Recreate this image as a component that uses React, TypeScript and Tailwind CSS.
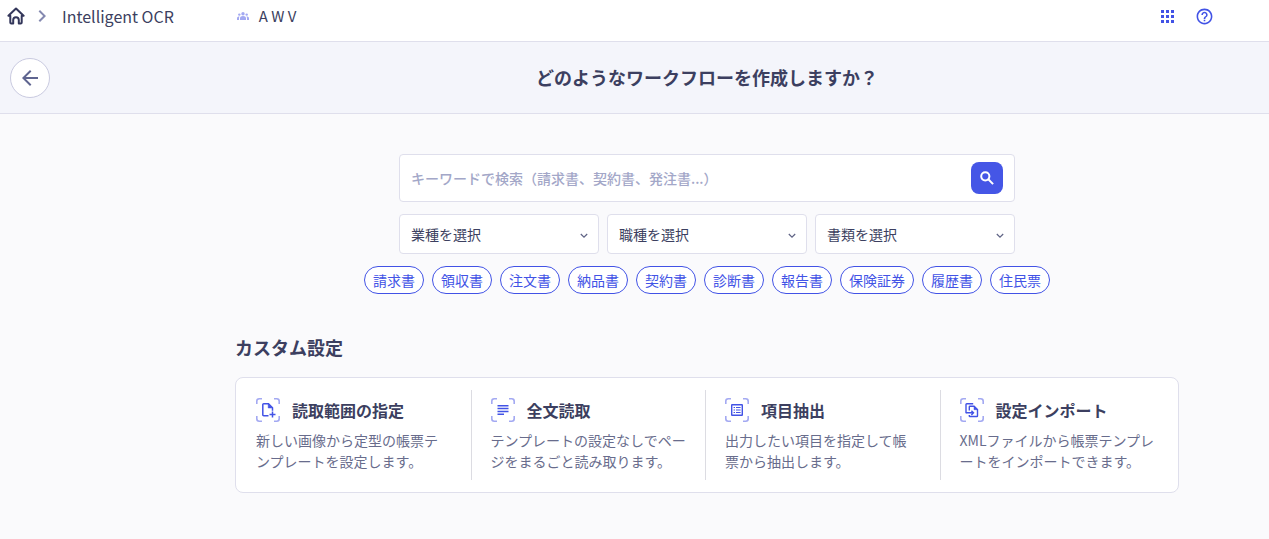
import { useState } from 'react';
import type { ReactNode } from 'react';
import { MdArrowBack, MdChevronRight, MdHelpOutline } from 'react-icons/md';

const FILTERS = [
  { id: 'industry', label: '業種を選択' },
  { id: 'job', label: '職種を選択' },
  { id: 'document', label: '書類を選択' },
];

const TAGS = [
  '請求書',
  '領収書',
  '注文書',
  '納品書',
  '契約書',
  '診断書',
  '報告書',
  '保険証券',
  '履歴書',
  '住民票',
];

function HomeIcon() {
  return (
    <svg viewBox="0 0 18 18" className="w-[18px] h-[18px]" fill="none" stroke="#33365a" strokeWidth="2" strokeLinejoin="round" strokeLinecap="round">
      <path d="M1.4 8.8 9 1.5l7.6 7.3h-1.9v6.7a1 1 0 0 1-1 1h-1.9v-3.4a2.8 2.8 0 0 0-5.6 0v3.4H4.3a1 1 0 0 1-1-1V8.8z" />
    </svg>
  );
}

function GroupIcon() {
  return (
    <svg viewBox="0 0 12 8" className="w-3 h-2" fill="#a3a9f2">
      <circle cx="6" cy="1.7" r="1.7" />
      <circle cx="2.3" cy="2.6" r="1.2" />
      <circle cx="9.7" cy="2.6" r="1.2" />
      <path d="M3 8V6.3c0-1.5 1.3-2.3 3-2.3s3 .8 3 2.3V8zM0 8V6c0-1 .9-1.6 2.6-1.6-.4.5-.6 1.1-.6 1.9V8zM12 8V6c0-1-.9-1.6-2.6-1.6.4.5.6 1.1.6 1.9V8z" />
    </svg>
  );
}

function AppsIcon() {
  return (
    <svg viewBox="0 0 13 13" className="w-[13px] h-[13px]" fill="currentColor">
      <path d="M0 0h3v3H0zM5 0h3v3H5zM10 0h3v3h-3zM0 5h3v3H0zM5 5h3v3H5zM10 5h3v3h-3zM0 10h3v3H0zM5 10h3v3H5zM10 10h3v3h-3z" />
    </svg>
  );
}

function SearchIcon() {
  return (
    <svg viewBox="0 0 14 14" className="w-[14px] h-[14px]" fill="none" stroke="currentColor" strokeWidth="2">
      <circle cx="5.3" cy="5.3" r="4.1" />
      <path d="m8.3 8.3 4.8 4.8" />
    </svg>
  );
}

// Corner brackets shared by every card icon
function ScanFrame({ children }: { children: ReactNode }) {
  return (
    <svg viewBox="0 0 24 24" className="w-6 h-6 shrink-0" fill="none">
      <path
        d="M.8 6V3.3A2.5 2.5 0 0 1 3.3.8H6M18 .8h2.7a2.5 2.5 0 0 1 2.5 2.5V6M23.2 18v2.7a2.5 2.5 0 0 1-2.5 2.5H18M6 23.2H3.3a2.5 2.5 0 0 1-2.5-2.5V18"
        stroke="#a3a9f2"
        strokeWidth="1.6"
      />
      {children}
    </svg>
  );
}

const CARDS = [
  {
    title: '読取範囲の指定',
    text: '新しい画像から定型の帳票テ\nンプレートを設定します。',
    icon: (
      <g stroke="#4253e6" strokeWidth="1.5">
        <path d="M12.5 17.7H7.7a.9.9 0 0 1-.9-.9V6.6a.9.9 0 0 1 .9-.9h4.8l4 4v3" />
        <path d="M12.2 5.8v4.2h4.2z" fill="#4253e6" strokeWidth=".5" />
        <path d="M16.5 13.5v6M13.5 16.5h6" />
      </g>
    ),
  },
  {
    title: '全文読取',
    text: 'テンプレートの設定なしでペー\nジをまるごと読み取ります。',
    icon: <path d="M6.5 7.7h11M6.5 10.6h11M6.5 13.4h11M6.5 16.3h6.5" stroke="#4253e6" strokeWidth="1.5" />,
  },
  {
    title: '項目抽出',
    text: '出力したい項目を指定して帳\n票から抽出します。',
    icon: (
      <g stroke="#4253e6" strokeWidth="1.4">
        <rect x="6.7" y="6.7" width="10.6" height="10.6" rx=".4" />
        <path d="M8.6 9.5H10M11 9.5h4.6M8.6 12H10M11 12h4.6M8.6 14.5H10M11 14.5h4.6" strokeWidth="1.2" />
      </g>
    ),
  },
  {
    title: '設定インポート',
    text: 'XMLファイルから帳票テンプレ\nートをインポートできます。',
    icon: (
      <g stroke="#4253e6" strokeWidth="1.4">
        <path d="M13.2 5.7H6.7a.7.7 0 0 0-.7.7v8.8" />
        <path d="M9.3 12.5V8.8a.6.6 0 0 1 .6-.6h4.2l3.4 3.4v6.3a.6.6 0 0 1-.6.6H9.9a.6.6 0 0 1-.6-.6v-.9" />
        <path d="M14 8.3v3.4h3.4z" fill="#4253e6" strokeWidth=".5" />
        <path d="M6 14.8h7.4M11.4 12.7l2.1 2.1-2.1 2.1" />
      </g>
    ),
  },
];

function TopBar() {
  return (
    <header className="flex items-start justify-between h-[42px] bg-white border-b border-[#dfdfec] pl-[7px] pr-[55px] pt-1">
      <div className="flex items-center h-6">
        <a href="#" aria-label="ホーム">
          <HomeIcon />
        </a>
        <MdChevronRight className="w-6 h-6 ml-[5px] text-[#8489b0]" />
        <span className="ml-2 text-base leading-6">Intelligent OCR</span>
        <span className="flex items-center gap-[10px] ml-[63px]">
          <GroupIcon />
          <span className="text-[15px] leading-6">A W V</span>
        </span>
      </div>
      <div className="flex items-center h-6 gap-[21px] text-[#4253e6]">
        <button type="button" aria-label="アプリ">
          <AppsIcon />
        </button>
        <button type="button" aria-label="ヘルプ">
          <MdHelpOutline className="w-[19px] h-[19px]" />
        </button>
      </div>
    </header>
  );
}

export default function App() {
  const [keyword, setKeyword] = useState('');

  return (
    <div lang="ja" className="min-h-screen bg-[#fafafc] text-[#3c3f60] font-['Noto_Sans_CJK_JP',sans-serif]">
      <TopBar />

      <div className="flex items-center h-[72px] px-[10px] bg-[#f4f5fb] border-b border-[#dfdfec]">
        <button
          type="button"
          aria-label="戻る"
          className="flex items-center justify-center w-10 h-10 rounded-full bg-white border border-[#c9cae0] text-[#5f6590]"
        >
          <MdArrowBack className="w-6 h-6" />
        </button>
        <h1 className="flex-1 pl-[105px] pb-[2px] text-center text-lg leading-6 font-bold">どのようなワークフローを作成しますか？</h1>
      </div>

      <main className="pl-[145px] pt-10">
        <form className="max-w-[616px] mx-auto" onSubmit={(e) => e.preventDefault()}>
          <div className="flex items-center h-12 px-[11px] bg-white border border-[#dfdfec] rounded">
            <input
              type="text"
              aria-label="キーワード"
              value={keyword}
              onChange={(e) => setKeyword(e.target.value)}
              placeholder="キーワードで検索（請求書、契約書、発注書...）"
              className="flex-1 min-w-0 text-sm font-medium placeholder:text-[#a3a7c8] focus:outline-none"
            />
            <button type="submit" aria-label="検索" className="flex items-center justify-center w-8 h-8 rounded-lg bg-[#4556e6] text-white">
              <SearchIcon />
            </button>
          </div>

          <div className="grid grid-cols-3 gap-2 mt-3">
            {FILTERS.map((filter) => (
              <div key={filter.id} className="relative">
                <select
                  aria-label={filter.label}
                  className="w-full h-10 pl-[11px] pr-8 text-sm appearance-none bg-white border border-[#dfdfec] rounded focus:outline-none"
                >
                  <option>{filter.label}</option>
                </select>
                <svg viewBox="0 0 8 8" className="absolute right-[11px] top-[18px] w-2 h-2 pointer-events-none" fill="none" stroke="#5f6385" strokeWidth="1.2">
                  <path d="M.8 2 4 5.2 7.2 2" />
                </svg>
              </div>
            ))}
          </div>
        </form>

        <div className="flex flex-wrap justify-center gap-2 mt-3">
          {TAGS.map((tag) => (
            <button
              key={tag}
              type="button"
              className="h-7 px-2 text-sm bg-white text-[#4253e6] border border-[#4253e6] rounded-full"
            >
              {tag}
            </button>
          ))}
        </div>

        <section className="max-w-[944px] mx-auto mt-10">
          <h2 className="text-lg leading-[26px] font-bold">カスタム設定</h2>
          <div className="grid grid-cols-4 mt-[17px] py-3 pr-1 bg-white border border-[#dfdfec] rounded-lg">
            {CARDS.map((card) => (
              <a key={card.title} href="#" className="block py-2 pl-[19px] pr-4 border-l border-[#dcdce2] first:border-transparent">
                <div className="flex items-center gap-3">
                  <ScanFrame>{card.icon}</ScanFrame>
                  <h3 className="text-base leading-6 font-bold">{card.title}</h3>
                </div>
                <p className="mt-2 text-sm leading-[21px] text-[#686c8c] whitespace-pre-line">{card.text}</p>
              </a>
            ))}
          </div>
        </section>
      </main>
    </div>
  );
}
